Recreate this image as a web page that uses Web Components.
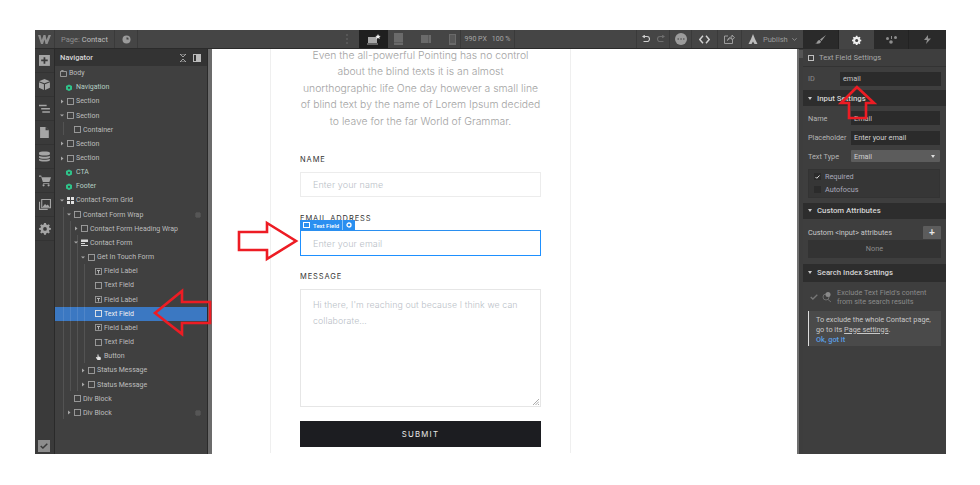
<!DOCTYPE html>
<html>
<head>
<meta charset="utf-8">
<title>Designer</title>
<style>
  html, body { margin: 0; background: #fff; }
  body { padding: 30px 34px 31px 35px; font-family: "Roboto", "Liberation Sans", sans-serif; }
</style>
</head>
<body>
<wf-app>
  <wf-topbar slot="top"></wf-topbar>
  <wf-rail slot="rail"></wf-rail>
  <wf-navigator slot="nav"></wf-navigator>
  <wf-canvas slot="canvas"></wf-canvas>
  <wf-settings slot="side"></wf-settings>
</wf-app>
<wf-arrow points="155,313 182,291 182,302 210,302 210,323 182,323 182,334"></wf-arrow>
<wf-arrow points="239,232 267,232 267,223 296,241 267,259 267,250 239,250"></wf-arrow>
<wf-arrow points="857,87 841,103 849,103 849,118 866,118 866,103 874,103"></wf-arrow>

<script>
const ICONS = {
  box: '<rect x=".5" y=".5" width="6" height="6" fill="none" stroke="currentColor" stroke-width=".9"/>',
  body: '<path d="M.5 1.500h6v5h-6zM.5 1.500l1-1h2" fill="none" stroke="currentColor" stroke-width=".9"/>',
  sym: '<path d="M3.500 .5l3 1.600v3.400l-3 1.600-3-1.600V2.100z" fill="#2fc38a"/><circle cx="3.500" cy="3.800" r="1.100" fill="#404040"/>',
  grid: '<path d="M0 0h3v3H0zM4 0h3v3H4zM0 4h3v3H0zM4 4h3v3H4z" fill="#e2e2e2"/>',
  form: '<path d="M0 .5h7v2.500H0zM0 4h4v1H0zM0 6h7v1H0z" fill="#d8d8d8"/>',
  label: '<rect x=".5" y=".5" width="6" height="6" fill="none" stroke="#999" stroke-width=".9"/><path d="M2 2h3v1H4v2.500H3V3H2z" fill="#b5b5b5"/>',
  hand: '<path d="M2.500 1.500h1v2l2 .4.5 2.300-1 .8H2.500L.8 4.500l.8-.5.9.6z" fill="#e6e6e6"/>'
};

class WfApp extends HTMLElement {
  constructor() {
    super();
    this.attachShadow({ mode: 'open' });
    this.shadowRoot.innerHTML = `
      <style>
        :host { display: grid; width: 911px; height: 424px; position: relative; overflow: hidden;
          grid-template-columns: 20px 152px 5px 585px 6px 143px; grid-template-rows: 19px 405px; background: #3a3a3a; }
        ::slotted([slot=top]) { grid-column: 1 / 6; }
        ::slotted([slot=side]) { grid-column: 6; grid-row: 1 / 3; }
        .strip { background: #6b6b6b; border-left: 1px solid #2a2a2a; }
        .scroll { background: #3d3d3d; border-left: 2px solid #6f6f6f; box-sizing: border-box; }
        .scroll i { display: block; width: 4px; height: 8px; margin-top: 1px; background: #555; }
      </style>
      <slot name="top"></slot>
      <slot name="rail"></slot>
      <slot name="nav"></slot>
      <div class="strip"></div>
      <slot name="canvas"></slot>
      <div class="scroll"><i></i></div>
      <slot name="side"></slot>`;
  }
}

class WfTopbar extends HTMLElement {
  constructor() {
    super();
    this.attachShadow({ mode: 'open' });
    this.shadowRoot.innerHTML = `
      <style>
        :host { display: flex; height: 19px; background: #454545; border-bottom: 1px solid #2b2b2b; box-sizing: border-box;
          align-items: stretch; color: #bdbdbd; font: 7.500px "Roboto", "Liberation Sans", sans-serif; }
        .c { display: flex; align-items: center; justify-content: center; border-right: 1px solid #3a3a3a; box-sizing: border-box; flex: none; }
        .logo { width: 20px; }
        .page { width: 60px; padding-left: 6px; justify-content: flex-start; }
        .page span { color: #8f8f8f; margin-right: 2px; }
        .eye { width: 23px; }
        .fill { flex: 1; }
        .active { background: #1f1f1f; width: 29px; border: 0; }
        .dev { width: 27px; border: 0; }
        .size { width: 55px; color: #a5a5a5; gap: 5px; font-size: 7px; border-left: 1px solid #3a3a3a; margin-left: -6px; }
        .noborder { border: 0; }
        svg { display: block; }
        .pub { color: #9a9a9a; gap: 4px; width: 40px; border: 0; justify-content: flex-start; }
      </style>
      <div class="c logo"><svg width="13" height="9" viewBox="0 0 13 9"><path d="M0 0h2.500l1.300 5L5.500 0h2l1 5L10.500 0H13L9.500 9h-2L6.500 4.500 5 9H3z" fill="#8f8f8f"/></svg></div>
      <div class="c page"><span>Page:</span>Contact</div>
      <div class="c eye"><svg width="9" height="9" viewBox="0 0 9 9"><circle cx="4.500" cy="4.500" r="4" fill="#9b9b9b"/><path d="M4.500 4.500V2.200A2.300 2.300 0 0 1 6.800 4.500z" fill="#454545"/></svg></div>
      <div class="c fill noborder" style="flex:0 0 197px"></div>
      <div class="c noborder" style="width:24px"><svg width="2" height="10" viewBox="0 0 2 10"><path d="M.5 0h1v2h-1zM.5 4h1v2h-1zM.5 8h1v2h-1z" fill="#6a6a6a"/></svg></div>
      <div class="c active"><svg width="14" height="11" viewBox="0 0 14 11"><path d="M1 3h9v6H1zM0 9.500h11v1H0z" fill="#a8a8a8"/><path d="M11 0l.8 1.700 1.900.2-1.400 1.200.4 1.900-1.700-1-1.700 1 .4-1.900L8.300 1.900l1.900-.2z" fill="#f4f4f4"/></svg></div>
      <div class="c dev" style="margin-left:-3px"><svg width="9" height="12" viewBox="0 0 9 12"><path d="M0 0h9v12H0z" fill="#6a6a6a"/><path d="M0 9.500h9v.5H0z" fill="#484848"/></svg></div>
      <div class="c dev"><svg width="10" height="8" viewBox="0 0 10 8"><path d="M0 0h10v8H0z" fill="#6a6a6a"/><path d="M7.500 0h.5v8h-.5z" fill="#484848"/></svg></div>
      <div class="c dev"><svg width="7" height="11" viewBox="0 0 7 11"><path d="M0 0h7v11H0z" fill="#6a6a6a"/><path d="M1 1h5v8H1z" fill="#585858"/></svg></div>
      <div class="c size"><span>990 PX</span><span>100 %</span></div>
      <div class="c fill noborder"></div>
      <div class="c" style="width:34px;gap:7px;border-left:1px solid #3a3a3a"><svg width="8" height="8" viewBox="0 0 8 8"><path d="M2.800 .3L1 1.500l1.800 1.300M1 1.500h4a2.500 2.500 0 0 1 0 5H1.500" fill="none" stroke="#d0d0d0" stroke-width="1.100"/></svg><svg width="8" height="8" viewBox="0 0 8 8"><path d="M5.200 .3L7 1.500 5.200 2.800M7 1.500H3a2.500 2.500 0 0 0 0 5h3.500" fill="none" stroke="#6e6e6e" stroke-width="1.100"/></svg></div>
      <div class="c" style="width:22px"><svg width="12" height="12" viewBox="0 0 12 12"><circle cx="6" cy="6" r="6" fill="#9c9c9c"/><path d="M2.500 5.500h1.500v1H2.500zM5.300 5.500h1.500v1H5.300zM8 5.500h1.500v1H8z" fill="#3e3e3e"/></svg></div>
      <div class="c" style="width:26px"><svg width="11" height="9" viewBox="0 0 11 9"><path d="M4 .8L.8 4.500 4 8.200M7 .8l3.200 3.700L7 8.200" fill="none" stroke="#d2d2d2" stroke-width="1.400"/></svg></div>
      <div class="c" style="width:24px"><svg width="11" height="10" viewBox="0 0 11 10"><path d="M4 2H.5v7.500H8.500V6M3.500 6.500C4 4 6 3 8 3V1l2.500 2.700L8 6V4.300c-2 0-3.500 .6-4.500 2.200z" fill="none" stroke="#a6a6a6" stroke-width=".9"/></svg></div>
      <div class="c noborder" style="width:21px"><svg width="10" height="10" viewBox="0 0 10 10"><path d="M5 0l2 5 2.500 5H6.500L5 7.500 3.500 10H.5L3 5z" fill="#bdbdbd"/></svg></div>
      <div class="c pub"><span>Publish</span><svg width="5" height="3" viewBox="0 0 5 3"><path d="M.3.300l2.200 2 2.200-2" fill="none" stroke="#9a9a9a" stroke-width=".8"/></svg></div>`;
  }
}

class WfRail extends HTMLElement {
  constructor() {
    super();
    this.attachShadow({ mode: 'open' });
    const items = [
      '<path d="M0 0h10v10H0z" fill="#a5a5a5"/><path d="M4.200 2h1.600v2.200H8v1.600H5.800V8H4.200V5.800H2V4.200h2.200z" fill="#3a3a3a"/>',
      '<path d="M5 0l5 2-5 2-5-2zM0 3l4.500 1.800V10L0 8zM10 3L5.500 4.800V10L10 8z" fill="#a5a5a5"/>',
      '<path d="M0 1.500h7v1.500H0zM2 4.500h8V6H2zM3 7.500h7V9H3z" fill="#a5a5a5"/>',
      '<path d="M1 0h5l3 3v7H1z" fill="#a5a5a5"/><path d="M6 0v3h3z" fill="#3a3a3a"/>',
      '<path d="M0 1.500C0 0 10 0 10 1.500v1.500C10 4.500 0 4.500 0 3zM0 4.500c2 1 8 1 10 0V6C10 7.500 0 7.500 0 6zM0 7.300c2 1 8 1 10 0v1.200C10 10 0 10 0 8.500z" fill="#a5a5a5"/>',
      '<path d="M0 .5h2l.6 1.500H11l-1.500 4.500H3.500L2 1.500H0zM3.800 7.500h5.700v.8H3.800z" fill="#a5a5a5"/><circle cx="4.200" cy="9.500" r="1" fill="#a5a5a5"/><circle cx="8.800" cy="9.500" r="1" fill="#a5a5a5"/>',
      '<path d="M0 2.500h1v6.500h7v1H0z" fill="#a5a5a5"/><path d="M2.500 .5h8v7.500h-8z" fill="none" stroke="#a5a5a5"/><path d="M3 7.500l2.500-3 1.500 1.500 1-1 2 2.500z" fill="#a5a5a5"/>',
      '<path d="M4 0h2l.3 1.600 1.100.5L8.800 1.200 10 2.500 9 3.800l.4 1.100L11 5.200v1.600l-1.600.3-.4 1.100.9 1.300L8.800 10.800 7.500 9.900l-1.200.5L6 12H4l-.3-1.600-1.100-.5-1.300.9L0 9.500l1-1.300-.4-1.100L-1 6.800V5.200L.6 4.900 1 3.800 0 2.500 1.200 1.200l1.300.9 1.100-.5z" fill="#a5a5a5" transform="translate(1 0) scale(.9)"/><circle cx="5.500" cy="5.400" r="1.700" fill="#3a3a3a"/>'
    ];
    this.shadowRoot.innerHTML = `
      <style>
        :host { display: flex; flex-direction: column; background: #3a3a3a; border-right: 1px solid #2a2a2a; box-sizing: border-box; height: 405px; }
        .i { height: 24px; display: flex; align-items: center; justify-content: center; border-bottom: 1px solid #333; box-sizing: border-box; flex: none; }
        .i:first-child { height: 23px; }
        .grow { flex: 1; }
        .check { width: 12px; height: 12px; margin: 0 0 2px 3px; background: #8d8d8d; display: flex; align-items: center; justify-content: center; }
      </style>
      ${items.map(p => `<div class="i"><svg width="12" height="12" viewBox="0 0 11 11">${p}</svg></div>`).join('')}
      <div class="grow"></div>
      <div class="check"><svg width="8" height="6" viewBox="0 0 8 6"><path d="M.7 3l2.200 2L7.300.7" fill="none" stroke="#3a3a3a" stroke-width="1.500"/></svg></div>`;
  }
}

class WfNavRow extends HTMLElement {
  constructor() {
    super();
    const indent = this.getAttribute('indent') || 0;
    const arrow = this.getAttribute('arrow');
    const icon = this.getAttribute('icon') || 'box';
    const arrowSvg = arrow === 'down'
      ? '<path d="M0 1.500h4L2 3.500z" fill="#a8a8a8"/>'
      : arrow === 'right' ? '<path d="M1 .5v4l2.500-2z" fill="#a8a8a8"/>' : '';
    this.attachShadow({ mode: 'open' });
    this.shadowRoot.innerHTML = `
      <style>
        :host { display: flex; align-items: center; height: 14.170px; color: #bdbdbd; font-size: 7px; }
        :host([selected]) { background: #3b78c2; color: #f2f2f2; }
        :host([icon=sym]) { color: #b5cfc3; }
        .in { display: flex; align-items: center; margin-left: ${indent}px; flex: 1; min-width: 0; white-space: nowrap; }
        .a { width: 5px; margin-right: 2px; flex: none; }
        .ic { flex: none; margin-right: 2px; color: #a0a0a0; display: block; }
        :host([selected]) .ic { color: #e8e8e8; }
        :host([icon=sym]) .ic { margin-right: 3px; }
        .g { margin: 0 6px 0 auto; }
        svg { display: block; }
      </style>
      <div class="in">
        <div class="a"><svg width="5" height="5" viewBox="0 0 5 5">${arrowSvg}</svg></div>
        <svg class="ic" width="${icon === 'sym' ? 8 : 7}" height="7" viewBox="0 0 7 7">${ICONS[icon]}</svg>
        <span><slot></slot></span>
        ${this.hasAttribute('grip') ? '<svg class="g" width="6" height="6" viewBox="0 0 6 6"><path d="M0 1.500h6v1H0zM0 3.500h6v1H0zM1.500 0h1v6h-1zM3.500 0h1v6h-1z" fill="#5e5e5e"/></svg>' : ''}
      </div>`;
  }
}

class WfNavigator extends HTMLElement {
  constructor() {
    super();
    this.attachShadow({ mode: 'open' });
    const guides = [[8, 73, 13], [8, 158, 212], [15, 172, 170], [22, 186, 156], [29, 215, 99]];
    const rows = [
      ['Body', -2, '', 'body'], ['Navigation', 3, '', 'sym'], ['Section', 5, 'right'], ['Section', 5, 'down'],
      ['Container', 12], ['Section', 5, 'right'], ['Section', 5, 'right'], ['CTA', 3, '', 'sym'], ['Footer', 3, '', 'sym'],
      ['Contact Form Grid', 5, 'down', 'grid'], ['Contact Form Wrap', 12, 'down', 'box', 1],
      ['Contact Form Heading Wrap', 19, 'right'], ['Contact Form', 19, 'down', 'form'], ['Get In Touch Form', 26, 'down'],
      ['Field Label', 33, '', 'label'], ['Text Field', 33], ['Field Label', 33, '', 'label'], ['Text Field', 33, '', 'box', 0, 1],
      ['Field Label', 33, '', 'label'], ['Text Field', 33], ['Button', 33, '', 'hand'],
      ['Status Message', 26, 'right'], ['Status Message', 26, 'right'], ['Div Block', 12], ['Div Block', 12, 'right', 'box', 1]
    ];
    this.shadowRoot.innerHTML = `
      <style>
        :host { display: block; background: #404040; position: relative; height: 405px; overflow: hidden; }
        header { height: 17px; background: #333; color: #d6d6d6; font: 500 7.600px "Roboto", "Liberation Sans", sans-serif; display: flex; align-items: center; padding: 0 6px 0 5px; gap: 7px; }
        header b { margin-right: auto; font-weight: 500; }
        .guide { position: absolute; width: 1px; background: rgba(255,255,255,.1); }
      </style>
      <header><b>Navigator</b>
        <svg width="6" height="8" viewBox="0 0 6 8"><path d="M0 0h6L3 3zM0 8h6L3 5z" fill="none" stroke="#bbb" stroke-width=".8"/></svg>
        <svg width="8" height="8" viewBox="0 0 8 8"><rect x=".5" y=".5" width="7" height="7" fill="none" stroke="#bbb"/><rect x="3" y="1" width="4" height="6" fill="#bbb"/></svg>
      </header>
      ${rows.map(r => `<wf-nav-row indent="${r[1]}" ${r[2] ? `arrow="${r[2]}"` : ''} icon="${r[3] || 'box'}" ${r[4] ? 'grip' : ''} ${r[5] ? 'selected' : ''}>${r[0]}</wf-nav-row>`).join('')}
      ${guides.map(g => `<div class="guide" style="left:${g[0]}px;top:${g[1]}px;height:${g[2]}px"></div>`).join('')}`;
  }
}

class WfField extends HTMLElement {
  constructor() {
    super();
    const selected = this.hasAttribute('selected');
    const area = this.hasAttribute('area');
    this.attachShadow({ mode: 'open' });
    this.shadowRoot.innerHTML = `
      <style>
        :host { display: block; position: relative; }
        label { display: block; font: 400 7.500px "Inter", "Liberation Sans", sans-serif; letter-spacing: .9px; color: #333; line-height: 10px; padding-top: 1px; margin-bottom: 7px; }
        .box { box-sizing: border-box; height: 25px; border: 1px solid #ececec; padding: 0 12px; display: flex; align-items: center; color: #b9c0c7;
          font: 300 9px "Inter", "Liberation Sans", sans-serif; letter-spacing: .1px; position: relative; }
        .area { height: 118px; border: 1px solid #e6e6e6; align-items: flex-start; padding-top: 7px; line-height: 15.500px; font-size: 8.800px; }
        .sel { border: 1px solid #1e90ff; border-top-color: #2a8ff0; margin-top: -1px; height: 26px; }
        .tag { position: absolute; left: 0; top: 7px; height: 10px; background: #2a8ff0; color: #fff; font: 500 6px "Roboto", "Liberation Sans", sans-serif; white-space: nowrap;
          display: flex; align-items: center; padding: 0 0 0 3px; gap: 3px; width: 55px; box-sizing: border-box; }
        .tag i { width: 1px; height: 10px; background: #8ec6f8; }
        .grip { position: absolute; right: 1px; bottom: 1px; }
      </style>
      <label><slot name="label"></slot></label>
      <div class="box ${area ? 'area' : ''} ${selected ? 'sel' : ''}"><span><slot></slot></span>
        ${area ? '<svg class="grip" width="6" height="6" viewBox="0 0 6 6"><path d="M0 6l6-6M2.500 6L6 2.500M5 6l1-1" stroke="#888" stroke-width=".7"/></svg>' : ''}
      </div>
      ${selected ? `<div class="tag">
        <svg width="7" height="6" viewBox="0 0 7 6"><rect x=".5" y=".5" width="6" height="5" fill="none" stroke="#fff"/></svg>
        <span>Text Field</span><i></i>
        <svg width="6" height="6" viewBox="0 0 6 6"><circle cx="3" cy="3" r="2" fill="none" stroke="#fff" stroke-width="1.300"/></svg></div>` : ''}`;
  }
}

class WfCanvas extends HTMLElement {
  constructor() {
    super();
    this.attachShadow({ mode: 'open' });
    this.shadowRoot.innerHTML = `
      <style>
        :host { display: block; background: #fff; height: 405px; overflow: hidden; }
        .col { box-sizing: border-box; width: 301px; height: 405px; margin-left: 58px; border-left: 1px solid #efefef; border-right: 1px solid #efefef; padding: 0 29px; }
        p { margin: -1px -10px 0; text-align: center; font: 300 10.380px/16.450px "Inter", "Liberation Sans", sans-serif; color: #a3a3a3; }
        wf-field { width: 241px; }
        .name { margin-top: 24px; }
        .email { margin-top: 16px; }
        .msg { margin-top: 15px; }
        button { display: block; width: 241px; height: 26px; margin-top: 14px; background: #1c1d21; color: #e8e8e8; border: 0; padding: 0;
          font: 400 7.800px "Inter", "Liberation Sans", sans-serif; letter-spacing: 1.200px; }
      </style>
      <div class="col">
        <p>Even the all-powerful Pointing has no control<br>about the blind texts it is an almost<br>unorthographic life One day however a small line<br>of blind text by the name of Lorem Ipsum decided<br>to leave for the far World of Grammar.</p>
        <wf-field class="name"><span slot="label">NAME</span>Enter your name</wf-field>
        <wf-field class="email" selected><span slot="label">EMAIL ADDRESS</span>Enter your email</wf-field>
        <wf-field class="msg" area><span slot="label">MESSAGE</span>Hi there, I'm reaching out because I think we can<br>collaborate…</wf-field>
        <button>SUBMIT</button>
      </div>`;
  }
}

class WfSection extends HTMLElement {
  constructor() {
    super();
    this.attachShadow({ mode: 'open' });
    this.shadowRoot.innerHTML = `
      <style>
        :host { display: block; }
        header { height: var(--head, 16px); background: #2d2d2d; color: #d4d4d4; font-weight: 500; font-size: 7.800px; display: flex; align-items: center; padding-left: 5px; gap: 5px; }
        svg { display: block; }
      </style>
      <header><svg width="4" height="3" viewBox="0 0 4 3"><path d="M0 0h4L2 3z" fill="#c8c8c8"/></svg><slot name="title"></slot></header>
      <slot></slot>`;
  }
}

class WfSettings extends HTMLElement {
  constructor() {
    super();
    this.attachShadow({ mode: 'open' });
    this.shadowRoot.innerHTML = `
      <style>
        :host { display: block; background: #3e3e3e; color: #b5b5b5; font: 7.300px "Roboto", "Liberation Sans", sans-serif; height: 424px; overflow: hidden; }
        .tabs { display: grid; grid-template-columns: 36px 35px 35px 37px; height: 19px; background: #2a2a2a; }
        .tabs div { display: flex; align-items: center; justify-content: center; border-right: 1px solid #222; }
        .tabs .on { background: #444; border: 0; }
        .title { height: 18px; display: flex; align-items: center; gap: 5px; padding-left: 5px; color: #a8a8a8; border-bottom: 1px solid #333; box-sizing: border-box; font-size: 7.600px; }
        .idrow { height: 23px; display: flex; align-items: center; padding: 0 5px 0 5px; justify-content: space-between; }
        .in { box-sizing: border-box; height: 14px; background: #2b2b2b; display: flex; align-items: center; padding-left: 3px; color: #c4c4c4; }
        .idrow .in { width: 101px; }
        .form { padding: 5px 5px 5px; display: grid; grid-template-columns: 43px 89px; row-gap: 5.500px; align-items: center; }
        .sel { background: #5c5c5c; height: 12px; justify-content: space-between; padding-right: 5px; color: #cfcfcf; border-radius: 1px; }
        .opts { grid-column: 1 / 3; height: 29px; background: #363636; border: 1px solid #333; box-sizing: border-box; padding: 3px 5px; display: grid; gap: 4px; margin-top: 1px; color: #a9a9ba; }
        .opt { display: flex; align-items: center; gap: 4px; height: 8px; }
        .cb { width: 7px; height: 7px; background: #2b2b2b; display: flex; align-items: center; justify-content: center; }
        .attr { padding: 7px 5px 6px; }
        .attr .t { display: flex; justify-content: space-between; align-items: center; height: 14px; color: #c8c8c8; }
        .plus { width: 18px; height: 13px; background: #5c5c5c; color: #e8e8e8; font: bold 10px/13px "Liberation Sans", sans-serif; text-align: center; border-radius: 1px 1px 0 0; margin-top: -1px; }
        .none { height: 18px; background: #333; border: 1px solid #333; box-sizing: border-box; display: flex; align-items: center; justify-content: center; color: #8c8c8c; }
        wf-section.s { --head: 18px; }
        .search { padding: 6px 5px; }
        .ex { display: flex; align-items: center; gap: 3px; color: #8a8a8a; line-height: 9px; padding-left: 2px; }
        .note { margin-top: 5px; background: #4a4a4a; border-left: 1px solid #ddd; height: 35px; padding: 4px 0 0 7px; line-height: 10px; color: #c8c8c8; box-sizing: border-box; }
        .note u { text-underline-offset: 1px; }
        .note a { color: #5a9fe6; font-weight: 500; }
        svg { display: block; }
      </style>
      <div class="tabs">
        <div><svg width="11" height="9" viewBox="0 0 11 9"><path d="M11 0L5 4.500 6.500 6zM4.500 5C3 5 2.500 6 2.200 7 2 7.800 1 8 0 8c2 1.200 5.500 1 6-1.500z" fill="#9a9a9a"/></svg></div>
        <div class="on"><svg width="10" height="10" viewBox="-1 -1 12 12"><path d="M4 0h2l.3 1.500 1.100.5L8.700 1.100 10 2.500 9 3.700l.4 1 1.600.3v2l-1.600.3-.4 1 1 1.200L8.700 11 7.400 10l-1.100.5L6 12H4l-.3-1.500-1.100-.5L1.300 11 0 9.500l1-1.200-.4-1L-1 7V5l1.600-.3.400-1L0 2.500 1.300 1.100 2.600 2l1.100-.5z" fill="#f0f0f0" transform="scale(.92)"/><circle cx="4.600" cy="5.500" r="1.800" fill="#444"/></svg></div>
        <div><svg width="11" height="8" viewBox="0 0 11 8"><circle cx="1.500" cy="2.500" r="1.500" fill="#8e8e8e"/><circle cx="5" cy="6" r="1.800" fill="#8e8e8e"/><circle cx="9.500" cy="1.500" r="1.500" fill="#8e8e8e"/><path d="M5 0h1v3H5z" fill="#8e8e8e"/></svg></div>
        <div style="border:0"><svg width="7" height="9" viewBox="0 0 7 9"><path d="M4 0L0 5h3L2 9l5-5.500H4z" fill="#8e8e8e"/></svg></div>
      </div>
      <div class="title"><svg width="6" height="6" viewBox="0 0 6 6"><rect x=".5" y=".5" width="5" height="5" fill="none" stroke="#c0c0c0"/></svg>Text Field Settings</div>
      <div class="idrow"><span style="color:#8c8c8c">ID</span><div class="in">email</div></div>
      <wf-section><span slot="title">Input Settings</span>
        <div class="form">
          <span>Name</span><div class="in">Email</div>
          <span>Placeholder</span><div class="in" style="color:#d0d0d0">Enter your email</div>
          <span>Text Type</span><div class="in sel">Email<svg width="4" height="3" viewBox="0 0 4 3"><path d="M0 0h4L2 3z" fill="#ddd"/></svg></div>
          <div class="opts">
            <div class="opt"><span class="cb"><svg width="5" height="4" viewBox="0 0 5 4"><path d="M.5 2l1.300 1.300L4.500.5" fill="none" stroke="#ddd"/></svg></span>Required</div>
            <div class="opt"><span class="cb"></span>Autofocus</div>
          </div>
        </div>
      </wf-section>
      <wf-section><span slot="title">Custom Attributes</span>
        <div class="attr">
          <div class="t"><span>Custom &lt;input&gt; attributes</span><div class="plus">+</div></div>
          <div class="none">None</div>
        </div>
      </wf-section>
      <wf-section class="s"><span slot="title">Search Index Settings</span>
        <div class="search">
          <div class="ex">
            <svg width="8" height="6" viewBox="0 0 8 6"><path d="M.7 3l2.200 2L7.300.7" fill="none" stroke="#777" stroke-width="1.300"/></svg>
            <svg width="12" height="12" viewBox="0 0 12 12" style="margin-right:1px"><circle cx="5" cy="6" r="3" fill="none" stroke="#6e6e6e"/><path d="M7 8.500L10 11" stroke="#6e6e6e"/><circle cx="7" cy="3.500" r="2.500" fill="#8a8a8a"/></svg>
            <span>Exclude Text Field's content<br>from site search results</span>
          </div>
          <div class="note">To exclude the whole Contact page,<br>go to its <u>Page settings</u>.<br><a>Ok, got it</a></div>
        </div>
      </wf-section>`;
  }
}

class WfArrow extends HTMLElement {
  constructor() {
    super();
    this.attachShadow({ mode: 'open' });
    this.shadowRoot.innerHTML = `
      <style>:host { position: absolute; left: 0; top: 0; pointer-events: none; display: block; } svg { display: block; }</style>
      <svg width="980" height="485" viewBox="0 0 980 485"><polygon points="${this.getAttribute('points')}" fill="none" stroke="#ed1c24" stroke-width="2.600"/></svg>`;
  }
}

customElements.define('wf-nav-row', WfNavRow);
customElements.define('wf-field', WfField);
customElements.define('wf-section', WfSection);
customElements.define('wf-topbar', WfTopbar);
customElements.define('wf-rail', WfRail);
customElements.define('wf-navigator', WfNavigator);
customElements.define('wf-canvas', WfCanvas);
customElements.define('wf-settings', WfSettings);
customElements.define('wf-app', WfApp);
customElements.define('wf-arrow', WfArrow);
</script>
</body>
</html>
